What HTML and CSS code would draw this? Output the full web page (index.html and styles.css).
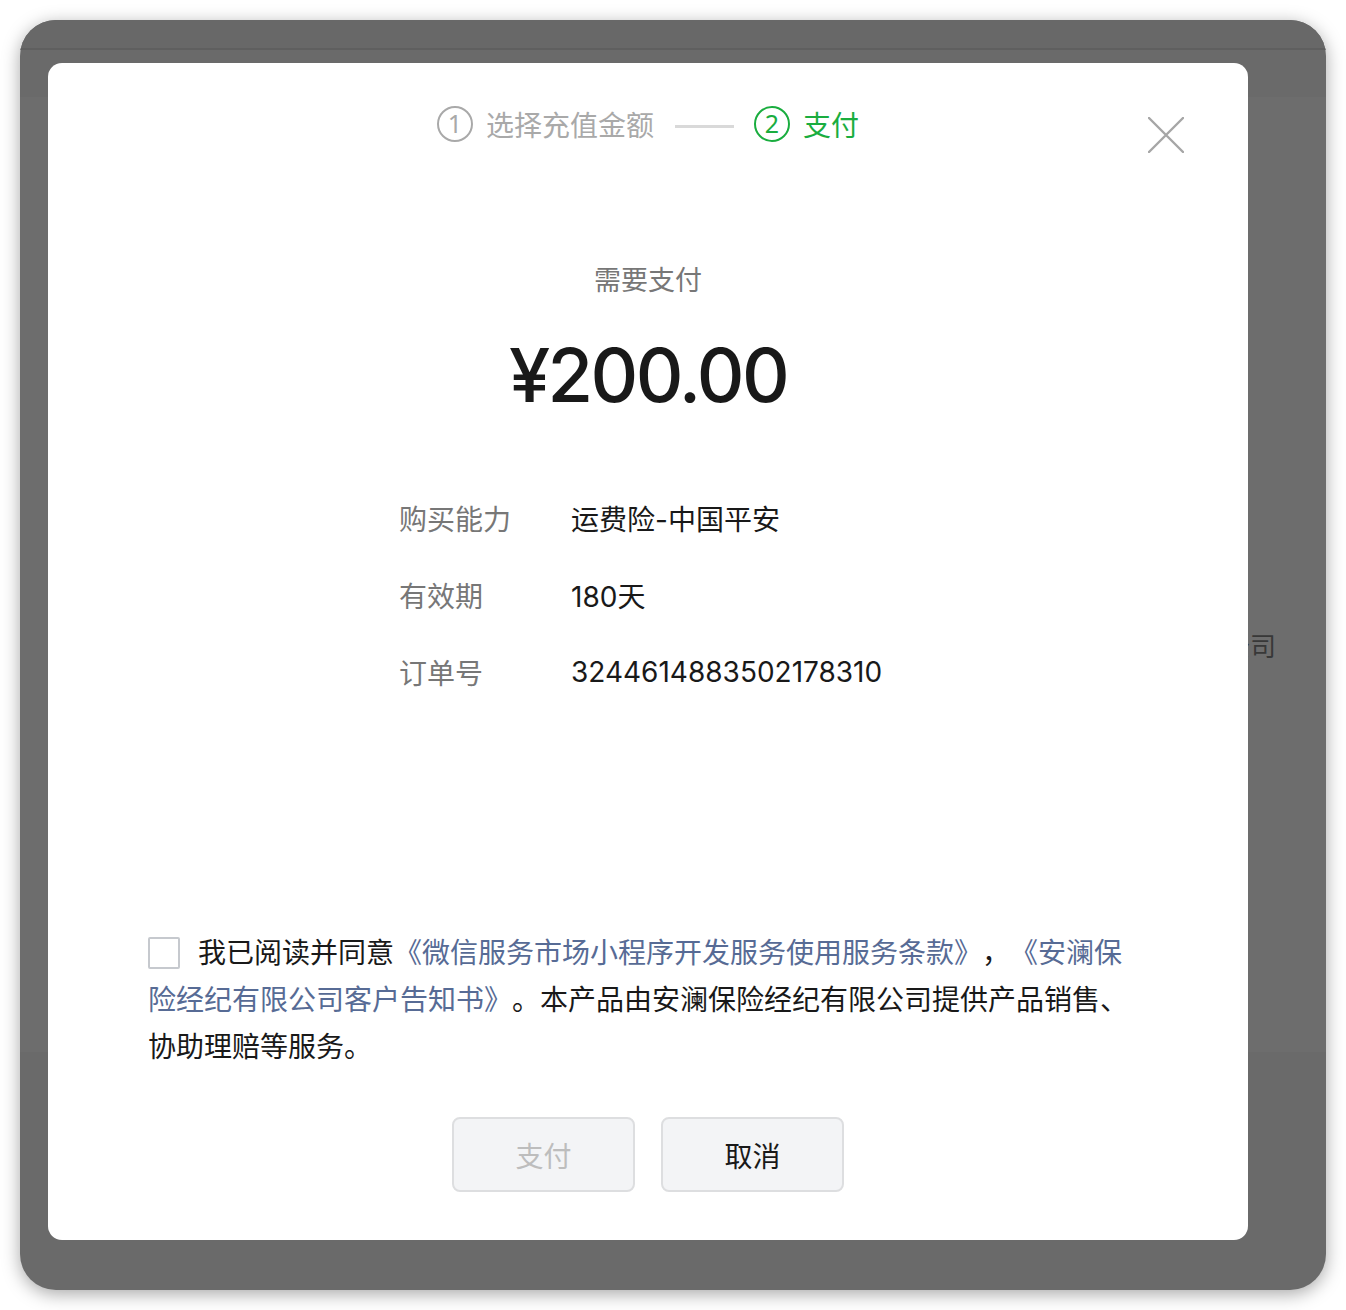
FILE: index.html
```html
<!DOCTYPE html>
<html lang="zh-CN">
<head>
<meta charset="utf-8">
<title>支付</title>
<link rel="stylesheet" href="styles.css">
</head>
<body>
<div class="window">
  <div class="page">
    <div class="page-header"></div>
    <div class="page-card">
      <span class="page-text">安澜保险经纪有限公司</span>
    </div>
  </div>
  <div class="overlay">
    <div class="modal">
      <button class="close" aria-label="关闭">
        <svg width="36" height="36" viewBox="0 0 36 36"><path d="M1 1L35 35M35 1L1 35" stroke="#a6a6a6" stroke-width="2.4" stroke-linecap="round" fill="none"/></svg>
      </button>
      <div class="steps">
        <div class="step">
          <span class="step-num">1</span>
          <span class="step-label">选择充值金额</span>
        </div>
        <span class="step-line"></span>
        <div class="step step-active">
          <span class="step-num">2</span>
          <span class="step-label">支付</span>
        </div>
      </div>
      <div class="pay-title">需要支付</div>
      <div class="amount">¥200.00</div>
      <div class="info">
        <div class="info-row"><span class="info-label">购买能力</span><span class="info-value">运费险-中国平安</span></div>
        <div class="info-row"><span class="info-label">有效期</span><span class="info-value">180天</span></div>
        <div class="info-row"><span class="info-label">订单号</span><span class="info-value">3244614883502178310</span></div>
      </div>
      <p class="agree"><span class="checkbox"></span>我已阅读并同意<a class="link">《微信服务市场小程序开发服务使用服务条款》</a>，<a class="link">《安澜保险经纪有限公司客户告知书》</a>。本产品由安澜保险经纪有限公司提供产品销售、协助理赔等服务。</p>
      <div class="actions">
        <button class="btn btn-disabled">支付</button>
        <button class="btn">取消</button>
      </div>
    </div>
  </div>
</div>
</body>
</html>
```

FILE: styles.css
```css
* { box-sizing: border-box; }
html, body { margin: 0; padding: 0; background: #ffffff; }
body {
  padding: 20px;
  font-family: Inter, "Noto Sans CJK SC", sans-serif;
  text-spacing-trim: space-all;
}
.window {
  position: relative;
  width: 1306px;
  height: 1270px;
  border-radius: 36px;
  background: #6a6a6a;
  overflow: hidden;
  box-shadow: 0 4px 18px rgba(0,0,0,0.35);
}
.page { display: flex; flex-direction: column; }
.page-header {
  height: 30px;
  border-bottom: 2px solid #5f5f5f;
  background: #686868;
}
.page-card {
  margin-top: 47px;
  height: 955px;
  background: #6d6d6d;
  display: flex;
  justify-content: flex-end;
  padding: 532px 50px 0 0;
}
.page-text {
  font-family: "Noto Sans CJK SC", sans-serif;
  font-size: 26px;
  line-height: 32px;
  color: #383838;
  height: 32px;
}
.overlay {
  position: absolute;
  inset: 0;
  padding: 43px 78px 50px 28px;
}
.modal {
  position: relative;
  width: 1200px;
  height: 1177px;
  background: #ffffff;
  border-radius: 14px;
  padding: 43px 100px 0;
  display: flex;
  flex-direction: column;
  font-family: Inter, "Noto Sans CJK SC", sans-serif;
}
.close {
  position: absolute;
  left: 1100px;
  top: 54px;
  width: 36px;
  height: 36px;
  padding: 0;
  border: 0;
  background: none;
}
.close svg { display: block; }
.steps {
  display: flex;
  align-items: center;
  justify-content: center;
  height: 36px;
}
.step {
  display: flex;
  align-items: center;
  gap: 13px;
  color: #a9a9a9;
}
.step-num {
  width: 36px;
  height: 36px;
  border-radius: 50%;
  border: 2px solid currentColor;
  display: flex;
  align-items: center;
  justify-content: center;
  font-family: "Noto Sans", sans-serif;
  font-size: 25px;
  line-height: 1;
  padding-bottom: 2px;
}
.step-label {
  font-family: "Noto Sans CJK SC", sans-serif;
  font-size: 28px;
  line-height: 36px;
}
.step-active { color: #1aad3f; }
.step-line {
  width: 59px;
  height: 3px;
  background: #d9d9d9;
  margin: 4px 20px 0 21px;
}
.pay-title {
  margin-top: 119px;
  text-align: center;
  font-family: "Noto Sans CJK SC", sans-serif;
  font-size: 27px;
  line-height: 36px;
  color: #777777;
}
.amount {
  margin-top: 33px;
  text-align: center;
  font-size: 74px;
  line-height: 90px;
  font-weight: 500;
  letter-spacing: -2.6px;
  color: #191919;
}
.info {
  margin-top: 59px;
  margin-left: 251px;
  display: flex;
  flex-direction: column;
}
.info-row {
  display: flex;
  align-items: center;
  height: 77px;
  font-size: 28px;
}
.info-label {
  width: 172px;
  font-family: "Noto Sans CJK SC", sans-serif;
  color: #777777;
}
.info-value {
  color: #191919;
}
.agree {
  margin: 218px 0 0;
  font-family: "Noto Sans CJK SC", sans-serif;
  font-size: 28px;
  line-height: 47px;
  color: #191919;
  text-spacing-trim: space-all;
}
.checkbox {
  display: inline-block;
  width: 32px;
  height: 32px;
  border: 2px solid #c6c9ce;
  border-radius: 2px;
  vertical-align: -6px;
  margin-right: 18px;
}
.link { color: #576b95; text-decoration: none; }
.actions {
  margin-top: 48px;
  display: flex;
  justify-content: center;
  gap: 26px;
}
.btn {
  width: 183px;
  height: 75px;
  border-radius: 8px;
  border: 2px solid #dddee0;
  background: #f3f4f6;
  font-family: "Noto Sans CJK SC", sans-serif;
  font-size: 28px;
  color: #191919;
  padding: 0;
}
.btn-disabled { color: #bdbdbd; }
```
